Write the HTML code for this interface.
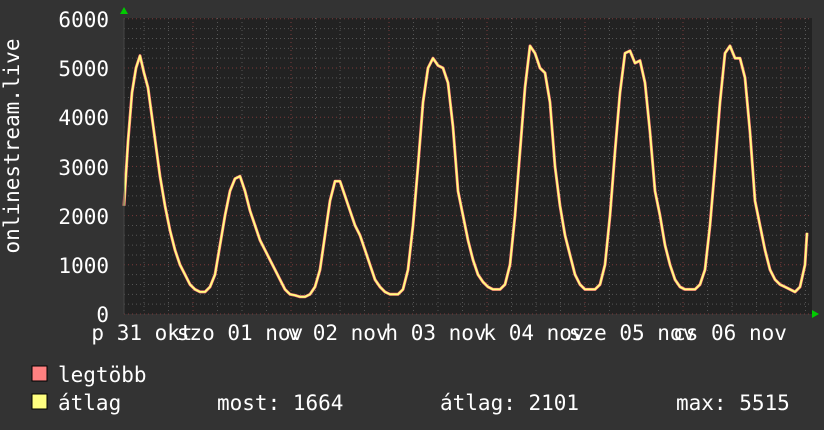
<!DOCTYPE html>
<html><head><meta charset="utf-8"><style>
html,body{margin:0;padding:0;background:#333;}
svg{display:block}
text{font-family:"DejaVu Sans Mono","Liberation Mono",monospace;fill:#fff;font-size:21px}
</style></head><body>
<svg id="s" width="824" height="430" xmlns="http://www.w3.org/2000/svg">
<rect width="824" height="430" fill="#333"/>
<rect x="124" y="18" width="688" height="296" fill="#222"/>
<g id="grid"></g>
<polyline id="mx" fill="none" stroke="#ff7c7c" stroke-width="3" stroke-linejoin="round"/>
<polyline id="av" fill="none" stroke="#ffff80" stroke-width="1.8" stroke-linejoin="round"/>
<polygon points="120,14 128,14 124,7" fill="#0c0"/>
<polygon points="812,310 812,318 819,314" fill="#0c0"/>
<line x1="124" y1="18" x2="124" y2="314" stroke="#444" stroke-width="1"/>
<g text-anchor="end">
<text x="109" y="27">6000</text><text x="109" y="76">5000</text><text x="109" y="125">4000</text>
<text x="109" y="175">3000</text><text x="109" y="224">2000</text><text x="109" y="273">1000</text>
<text x="109" y="322">0</text></g>
<g text-anchor="middle">
<text x="142" y="340">p 31 okt</text><text x="240" y="340">szo 01 nov</text>
<text x="338" y="340">v 02 nov</text><text x="436" y="340">h 03 nov</text>
<text x="534" y="340">k 04 nov</text><text x="632" y="340">sze 05 nov</text>
<text x="730" y="340">cs 06 nov</text></g>
<text transform="translate(19,146) rotate(-90)" text-anchor="middle">onlinestream.live</text>
<rect x="32" y="366" width="15" height="15" fill="#ff8080" stroke="#000"/>
<rect x="32" y="394" width="15" height="15" fill="#ffff80" stroke="#000"/>
<text x="58" y="382">legtöbb</text>
<text x="58" y="410">átlag</text>
<text x="217" y="410">most: 1664</text>
<text x="440" y="410">átlag: 2101</text>
<text x="676" y="410">max: 5515</text>
</svg>
<script>
var g=document.getElementById('grid'),h='';
for(var i=0;i<=30;i++){var y=314-i*9.84;var maj=i%5==0;
h+='<line x1="124" x2="812" y1="'+y+'" y2="'+y+'" stroke="'+(maj?'#7a3b3b':'#555')+'" stroke-dasharray="1,3"/>';}
for(var x=124+20;x<812;x+=24.5){var d=Math.round((x-193)/98);var maj=Math.abs(x-(193+d*98))<3;
h+='<line y1="18" y2="314" x1="'+x+'" x2="'+x+'" stroke="'+(maj?'#7a3b3b':'#555')+'" stroke-dasharray="1,3"/>';}
g.innerHTML=h;
var d=[124,2200,128,3500,132,4500,136,5000,140,5250,144,4900,148,4600,152,4000,156,3400,160,2800,165,2200,170,1700,175,1300,180,1000,185,800,190,600,195,500,200,450,205,450,210,550,215,800,220,1400,225,2000,230,2500,235,2750,240,2800,245,2500,250,2100,255,1800,260,1500,265,1300,270,1100,275,900,280,700,285,500,290,400,295,380,300,350,305,350,310,400,315,550,320,900,325,1600,330,2300,335,2700,340,2700,345,2400,350,2100,355,1800,360,1600,365,1300,370,1000,375,700,380,550,385,450,390,400,398,400,403,500,408,900,413,1800,418,3000,423,4300,428,5000,433,5200,438,5050,443,5000,448,4700,453,3800,458,2500,463,2000,468,1500,473,1100,478,800,483,650,488,550,493,500,500,500,505,600,510,1000,515,2000,520,3300,525,4600,530,5450,535,5300,540,5000,545,4900,550,4300,555,3000,560,2200,565,1600,570,1200,575,800,580,600,585,500,595,500,600,600,605,1000,610,2000,615,3300,620,4500,625,5300,630,5350,635,5100,640,5150,645,4700,650,3700,655,2500,660,2000,665,1400,670,1000,675,700,680,550,685,500,695,500,700,600,705,900,710,1800,715,3000,720,4300,725,5300,730,5450,735,5200,740,5200,745,4800,750,3700,755,2300,760,1800,765,1300,770,900,775,700,780,600,785,550,790,500,795,450,800,550,805,1000,807,1650];
var p='';for(var i=0;i<d.length;i+=2){p+=d[i]+','+(314-d[i+1]*0.0492).toFixed(1)+' ';}
document.getElementById('mx').setAttribute('points',p);
document.getElementById('av').setAttribute('points',p);
</script>
</body></html>
